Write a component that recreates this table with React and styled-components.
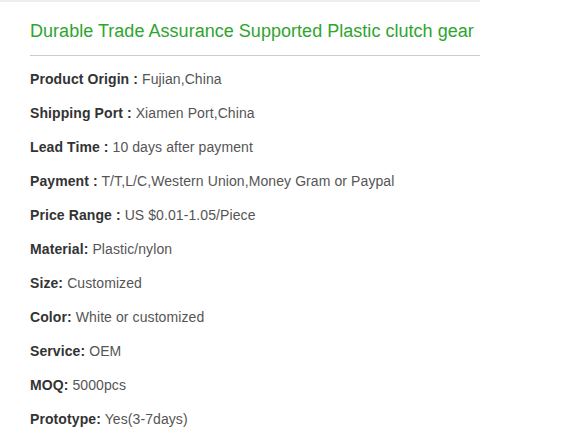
import React from "react"
import styled, { createGlobalStyle } from "styled-components"

const GlobalStyle = createGlobalStyle`
  body {
    margin: 0;
    background: #fff;
    font-family: "Liberation Sans", Arial, sans-serif;
  }
`

const Panel = styled.section`
  width: 450px;
  padding: 0 0 0 30px;
  border-top: 2px solid #eeeeee;
`

const Title = styled.h1`
  margin: 0;
  padding: 17px 0 12px;
  font-size: 18px;
  font-weight: normal;
  line-height: 24px;
  color: #2ea52e;
  letter-spacing: 0.03px;
  border-bottom: 1px solid #cccccc;
`

const SpecList = styled.ul`
  list-style: none;
  margin: 0;
  padding: 6px 0 0;
`

const SpecRow = styled.li`
  font-size: 14px;
  line-height: 34px;
  color: #555555;
  letter-spacing: 0.09px;
  white-space: nowrap;
`

const Label = styled.strong`
  color: #333333;
  font-weight: bold;
`

const specs = [
  ["Product Origin :", "Fujian,China"],
  ["Shipping Port :", "Xiamen Port,China"],
  ["Lead Time :", "10 days after payment"],
  ["Payment :", "T/T,L/C,Western Union,Money Gram or Paypal"],
  ["Price Range :", "US $0.01-1.05/Piece"],
  ["Material:", "Plastic/nylon"],
  ["Size:", "Customized"],
  ["Color:", "White or customized"],
  ["Service:", "OEM"],
  ["MOQ:", "5000pcs"],
  ["Prototype:", "Yes(3-7days)"],
]

const App = () => (
  <>
    <GlobalStyle />
    <Panel>
      <Title>Durable Trade Assurance Supported Plastic clutch gear</Title>
      <SpecList>
        {specs.map(([label, value]) => (
          <SpecRow key={label}>
            <Label>{label}</Label> {value}
          </SpecRow>
        ))}
      </SpecList>
    </Panel>
  </>
)

export default App
